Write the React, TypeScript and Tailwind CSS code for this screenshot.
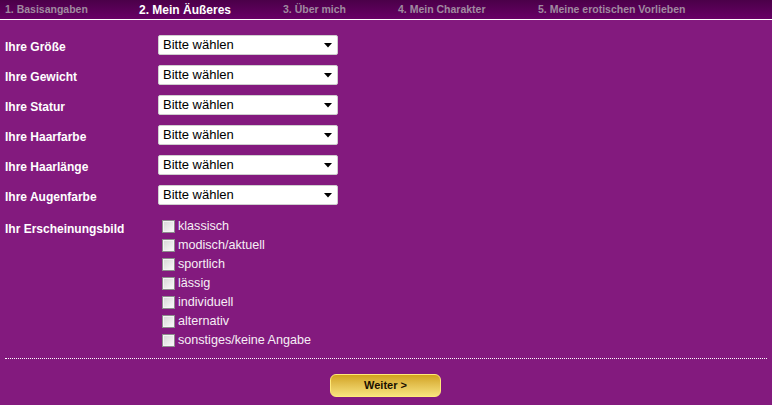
const steps = [
  { label: "1. Basisangaben", w: "w-[134px]", active: false },
  { label: "2. Mein Äußeres", w: "w-[144px]", active: true },
  { label: "3. Über mich", w: "w-[115px]", active: false },
  { label: "4. Mein Charakter", w: "w-[140px]", active: false },
  { label: "5. Meine erotischen Vorlieben", w: "", active: false },
]

const fields = ["Ihre Größe", "Ihre Gewicht", "Ihre Statur", "Ihre Haarfarbe", "Ihre Haarlänge", "Ihre Augenfarbe"]

const looks = ["klassisch", "modisch/aktuell", "sportlich", "lässig", "individuell", "alternativ", "sonstiges/keine Angabe"]

function FakeSelect() {
  return (
    <div className="flex h-[20px] w-[180px] items-center justify-between rounded-[2px] border border-[#cfcfcf] bg-white pl-[4px] pr-[5px] text-[13px] text-black">
      <span>Bitte wählen</span>
      <svg width="8" height="5" viewBox="0 0 8 5">
        <polygon points="0,0 8,0 4,4.5" fill="#000" />
      </svg>
    </div>
  )
}

function Check({ label }: { label: string }) {
  return (
    <label className="flex h-[19px] items-center gap-[3px] text-[12.6px] text-[#f6eef5]">
      <span className="h-[13px] w-[13px] shrink-0 border border-[#8d8d8d] bg-gradient-to-br from-[#d6d6d6] to-[#fbfbfb] shadow-[inset_0_0_0_1px_#f4f4f4]" />
      {label}
    </label>
  )
}

export default function App() {
  return (
    <div className="h-[405px] w-[772px] bg-[#831a7e] font-['Liberation_Sans',Arial,sans-serif]">
      {/* Step bar */}
      <div className="flex h-[20px] items-center border-b border-white bg-gradient-to-b from-[#4b0049] to-[#680066] pl-[5px]">
        {steps.map((s) => (
          <span
            key={s.label}
            className={`${s.w} shrink-0 font-bold ${s.active ? "text-[12px] text-white" : "text-[10.5px] text-[#a08aa0]"}`}
          >
            {s.label}
          </span>
        ))}
      </div>

      {/* Form */}
      <div className="flex flex-col pl-[5px] pt-[15px]">
        {fields.map((f) => (
          <div key={f} className="flex h-[30px] items-start">
            <span className="w-[153px] pt-[3px] text-[12px] font-bold text-white">{f}</span>
            <FakeSelect />
          </div>
        ))}
        <div className="flex items-start pt-[2px]">
          <span className="w-[157px] pt-[3px] text-[12px] font-bold text-white">Ihr Erscheinungsbild</span>
          <div className="flex flex-col">
            {looks.map((l) => (
              <Check key={l} label={l} />
            ))}
          </div>
        </div>
      </div>

      <div className="mx-[5px] mt-[8px] border-t border-dotted border-white" />

      <div className="flex justify-center pr-[1px] pt-[15px]">
        <button className="h-[23px] w-[111px] rounded-[6px] border border-[#ffe97a] bg-gradient-to-b from-[#d2a31a] to-[#f7e27c] text-[11px] font-bold text-[#1a1000]">
          Weiter &gt;
        </button>
      </div>
    </div>
  )
}
